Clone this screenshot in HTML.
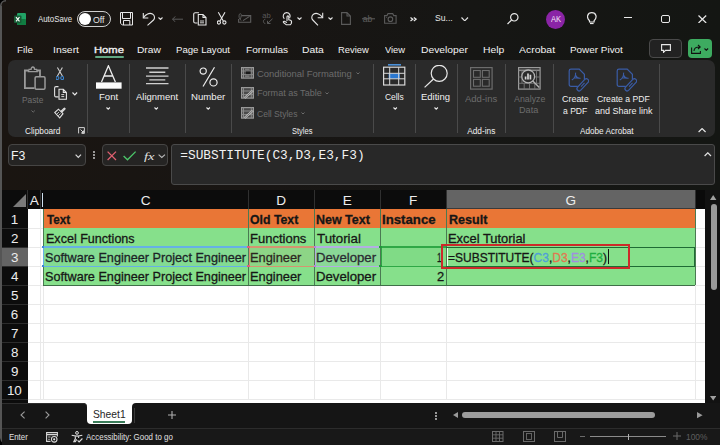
<!DOCTYPE html>
<html><head><meta charset="utf-8">
<style>
*{margin:0;padding:0;box-sizing:border-box}
html,body{width:720px;height:445px;overflow:hidden;background:linear-gradient(90deg,#1a1511 0%,#181513 35%,#161614 65%,#141613 100%);font-family:"Liberation Sans",sans-serif;position:relative}
.a{position:absolute;display:block}
.t{position:absolute;white-space:nowrap;line-height:1;transform-origin:0 0}
.c{-webkit-text-stroke:0.25px #161616}
</style></head><body>
<div class="a" style="left:0px;top:5.5px;width:1.6px;height:434px;background:#555555;"></div>
<svg class="a" style="left:0px;top:0px;" width="7" height="7" viewBox="0 0 7 7" fill="none"><path d="M0 0 H6 A5.5 5.5 0 0 0 0.8 5 V6 H0 Z" fill="#000"/><path d="M0.8 6 V5.5 A5 5 0 0 1 6 0.8" stroke="#555" stroke-width="1.6"/></svg>
<svg class="a" style="left:0px;top:436px;" width="9" height="9" viewBox="0 0 9 9" fill="none"><path d="M0 9 H8 A7.5 7.5 0 0 1 0.8 2 V0 H0 Z" fill="#000"/><path d="M0.8 0 V2 A7 7 0 0 0 8 8.2" stroke="#555" stroke-width="1.6"/></svg>
<svg class="a" style="left:14px;top:13px;" width="12" height="12" viewBox="0 0 12 12" fill="none"><rect x="3" y="0" width="9" height="12" rx="1.2" fill="#21a366"/><rect x="3" y="6" width="9" height="6" rx="1" fill="#107c41"/><rect x="0" y="2.5" width="7.5" height="7.5" rx="1" fill="#185c37"/><path d="M2 4.2 L5.5 8.3 M5.5 4.2 L2 8.3" stroke="#fff" stroke-width="1.1"/></svg>
<div class="t" style="left:38.10px;top:16.06px;font-size:8.2px;color:#e6e6e6;transform:scaleX(0.960);">AutoSave</div>
<div class="a" style="left:77px;top:10.8px;width:34px;height:16px;background:#1e1c1a;border:1.3px solid #cfcfcf;border-radius:8px;box-sizing:border-box"></div>
<div class="a" style="left:79px;top:13px;width:12px;height:12px;background:#fff;border-radius:50%"></div>
<div class="t" style="left:93.40px;top:15.72px;font-size:8.6px;color:#e6e6e6;transform:scaleX(1.021);">Off</div>
<svg class="a" style="left:119.5px;top:11.5px;" width="13" height="14" viewBox="0 0 13 14" fill="none"><path d="M0.5 0.5 H12.5 V13 H2.3 L0.5 11.2 Z" stroke="#e6e6e6" stroke-width="1"/><path d="M2.5 0.5 V6.5 H10.5 V0.5" stroke="#e6e6e6" stroke-width="1"/><path d="M3.5 13 V8.5 H9.8 V13" stroke="#e6e6e6" stroke-width="1"/></svg>
<svg class="a" style="left:141.5px;top:11.5px;" width="14" height="14" viewBox="0 0 14 14" fill="none"><path d="M1.3 1 V6 H6.3" stroke="#e6e6e6" stroke-width="1.1"/><path d="M1.5 5.8 C3.5 2 7.5 0.5 10.5 2 C13 3.5 13 6.5 11.5 8 L5.5 13.3" stroke="#e6e6e6" stroke-width="1.1"/></svg>
<svg class="a" style="left:158.2px;top:17px;" width="5" height="3" viewBox="0 0 5 3" fill="none"><path d="M0.5 0.5 L2.5 2.5 L4.5 0.5" stroke="#e0e0e0" stroke-width="1.1"/></svg>
<svg class="a" style="left:172px;top:15.6px;" width="11.5" height="6.5" viewBox="0 0 11.5 6.5" fill="none"><path d="M0.5 3.2 H11 M3.5 0.3 L0.5 3.2 L3.5 6.1" stroke="#5a5a5a" stroke-width="1"/></svg>
<svg class="a" style="left:192.7px;top:11.8px;" width="14" height="14" viewBox="0 0 14 14" fill="none"><path d="M6 0.8 H2.3 C1.3 0.8 0.7 1.4 0.7 2.4 V9.4 C0.7 10.4 1.3 11 2.3 11 H4.5" stroke="#e6e6e6" stroke-width="1.1"/><path d="M5.3 2.5 H10 L13 5.5 V13 H5.3 Z M10 2.5 V5.5 H13" stroke="#e6e6e6" stroke-width="1.1"/><path d="M7 9 H11 M7 10.8 H11" stroke="#e6e6e6" stroke-width="0.9"/></svg>
<svg class="a" style="left:217.4px;top:12.3px;" width="10" height="13" viewBox="0 0 10 13" fill="none"><circle cx="1.9" cy="10.5" r="1.6" stroke="#e6e6e6" stroke-width="1.1"/><circle cx="7.4" cy="10.5" r="1.6" stroke="#e6e6e6" stroke-width="1.1"/><path d="M1.3 0.3 L6.3 9 M8 0.3 L3 9" stroke="#e6e6e6" stroke-width="1.1"/></svg>
<svg class="a" style="left:238px;top:12.5px;" width="14" height="10" viewBox="0 0 14 10" fill="none"><path d="M3.5 2.6 H12.7 V9.3 H0.6 V6" stroke="#5e5e5e" stroke-width="1.1"/><path d="M5 7.6 L11.6 3.4" stroke="#5e5e5e" stroke-width="1.1"/><path d="M2 6.3 C0.5 4.5 0.8 0.6 2.2 0.6 C3.6 0.6 3.8 3.2 2 6.3 L3.4 7.6" stroke="#5e5e5e" stroke-width="0.9"/></svg>
<svg class="a" style="left:262px;top:12.2px;" width="12" height="13" viewBox="0 0 12 13" fill="none"><text x="0.2" y="5.8" font-family="Liberation Sans" font-size="7.6" fill="#5a5a5a">ab</text><path d="M3.3 7.2 C0.8 7.5 0.8 11.3 3.3 11.5 M5.5 11.5 L10.5 6.8 M5.5 11.5 H8.5 M5.5 11.5 V8.8" stroke="#5a5a5a" stroke-width="1"/></svg>
<svg class="a" style="left:280.5px;top:11.8px;" width="12" height="14" viewBox="0 0 12 14" fill="none"><path d="M6 9 V4.8 C6 3.5 7.8 3.5 7.8 4.8 V7.8 L9.5 8.3 C10.8 8.8 10.8 10 10.3 11.5 L9.3 12.8 H5.3 L2.5 10.5 C2 10 2.5 9 3.3 9.3 L6 10.5" stroke="#e6e6e6" stroke-width="1.1"/><path d="M3.3 6.8 C1 4.5 2.5 0.6 5.5 0.6 C8.5 0.6 10 3.5 8.6 6" stroke="#e6e6e6" stroke-width="1.1"/></svg>
<svg class="a" style="left:297px;top:17px;" width="5" height="3" viewBox="0 0 5 3" fill="none"><path d="M0.5 0.5 L2.5 2.5 L4.5 0.5" stroke="#e0e0e0" stroke-width="1.1"/></svg>
<svg class="a" style="left:310.8px;top:11.5px;" width="13" height="14" viewBox="0 0 13 14" fill="none"><path d="M11.7 0.8 V5.8 H6.7" stroke="#e6e6e6" stroke-width="1.1"/><path d="M11.5 5.6 C9.5 2 5.5 0.5 2.8 2 C0.3 3.5 0.3 6.5 1.8 8 L7 13.3" stroke="#e6e6e6" stroke-width="1.1"/></svg>
<svg class="a" style="left:327.5px;top:17px;" width="5" height="3" viewBox="0 0 5 3" fill="none"><path d="M0.5 0.5 L2.5 2.5 L4.5 0.5" stroke="#e0e0e0" stroke-width="1.1"/></svg>
<svg class="a" style="left:341.3px;top:12.2px;" width="10" height="13" viewBox="0 0 10 13" fill="none"><path d="M0.6 0.6 H6 L9.4 4 V12.4 H0.6 Z M6 0.6 V4 H9.4" stroke="#5a5a5a" stroke-width="1.1"/></svg>
<svg class="a" style="left:362px;top:14.4px;" width="13" height="9" viewBox="0 0 13 9" fill="none"><text x="0.8" y="7.5" font-family="Liberation Sans" font-size="8.6" fill="#5e5e5e">ab</text><path d="M0 4.8 H13" stroke="#5e5e5e" stroke-width="1"/></svg>
<svg class="a" style="left:384.4px;top:12.6px;" width="13" height="11" viewBox="0 0 13 11" fill="none"><path d="M0.6 2.6 H3 L4 0.6 H8.7 L9.7 2.6 H12.1 V10.3 H0.6 Z" stroke="#5a5a5a" stroke-width="1.1"/><circle cx="6.4" cy="6.2" r="2.3" stroke="#5a5a5a" stroke-width="1.1"/><circle cx="2.6" cy="4.3" r="0.5" fill="#5a5a5a"/></svg>
<svg class="a" style="left:409.5px;top:17px;" width="7" height="5" viewBox="0 0 7 5" fill="none"><path d="M0.5 0.5 L2.8 2.2 L0.5 4 M3.8 0.5 L6.1 2.2 L3.8 4" stroke="#e8e8e8" stroke-width="1.2"/></svg>
<div class="t" style="left:435.21px;top:14.28px;font-size:9px;color:#e8e8e8;transform:scaleX(0.958);">Su...</div>
<svg class="a" style="left:461.3px;top:16.9px;" width="7.5" height="4.5" viewBox="0 0 7.5 4.5" fill="none"><path d="M0.5 0.5 L3.75 3.8 L7 0.5" stroke="#e0e0e0" stroke-width="1.2"/></svg>
<svg class="a" style="left:506.5px;top:12.5px;" width="12" height="12" viewBox="0 0 12 12" fill="none"><circle cx="7.3" cy="4.3" r="3.7" stroke="#e8e8e8" stroke-width="1.2"/><path d="M4.6 7 L0.5 11" stroke="#e8e8e8" stroke-width="1.2"/></svg>
<div class="a" style="left:546.3px;top:9.5px;width:19px;height:19px;background:#8a24a6;border-radius:50%"></div>
<div class="t" style="left:550.80px;top:14.89px;font-size:8.4px;color:#f4e8f8;transform:scaleX(0.902);">AK</div>
<svg class="a" style="left:586.7px;top:12px;" width="10" height="13" viewBox="0 0 10 13" fill="none"><path d="M2.5 8.8 C0.5 7 0.3 5 0.7 3.5 C1.3 1.5 3 0.6 4.8 0.6 C6.6 0.6 8.3 1.5 8.9 3.5 C9.3 5 9.1 7 7.1 8.8 V10 H2.5 Z" stroke="#e8e8e8" stroke-width="1.2"/><path d="M3 11.5 H6.6" stroke="#e8e8e8" stroke-width="1.2"/></svg>
<div class="a" style="left:623.8px;top:17px;width:8.5px;height:1.3px;background:#e8e8e8;"></div>
<div class="a" style="left:661px;top:14.5px;width:9px;height:8.5px;background:transparent;border:1.4px solid #e8e8e8;border-radius:2px;box-sizing:border-box"></div>
<svg class="a" style="left:698.4px;top:14.5px;" width="9" height="8.5" viewBox="0 0 9 8.5" fill="none"><path d="M0.5 0.5 L8.2 8 M8.2 0.5 L0.5 8" stroke="#e8e8e8" stroke-width="1.2"/></svg>
<div class="t" style="left:17.41px;top:44.76px;font-size:9.5px;color:#f2f2f2;transform:scaleX(1.046);">File</div>
<div class="t" style="left:53.06px;top:44.76px;font-size:9.5px;color:#f2f2f2;transform:scaleX(1.094);">Insert</div>
<div class="t" style="left:94.10px;top:44.76px;font-size:9.5px;color:#f2f2f2;transform:scaleX(1.179);-webkit-text-stroke:0.35px #f2f2f2;">Home</div>
<div class="t" style="left:137.18px;top:44.76px;font-size:9.5px;color:#f2f2f2;transform:scaleX(1.074);">Draw</div>
<div class="t" style="left:175.83px;top:44.76px;font-size:9.5px;color:#f2f2f2;transform:scaleX(1.013);">Page Layout</div>
<div class="t" style="left:246.19px;top:44.76px;font-size:9.5px;color:#f2f2f2;transform:scaleX(1.064);">Formulas</div>
<div class="t" style="left:302.17px;top:44.76px;font-size:9.5px;color:#f2f2f2;transform:scaleX(1.089);">Data</div>
<div class="t" style="left:338.25px;top:44.76px;font-size:9.5px;color:#f2f2f2;transform:scaleX(0.987);">Review</div>
<div class="t" style="left:384.95px;top:44.76px;font-size:9.5px;color:#f2f2f2;transform:scaleX(0.981);">View</div>
<div class="t" style="left:421.18px;top:44.76px;font-size:9.5px;color:#f2f2f2;transform:scaleX(1.084);">Developer</div>
<div class="t" style="left:483.17px;top:44.76px;font-size:9.5px;color:#f2f2f2;transform:scaleX(1.088);">Help</div>
<div class="t" style="left:519.00px;top:44.76px;font-size:9.5px;color:#f2f2f2;transform:scaleX(1.102);">Acrobat</div>
<div class="t" style="left:570.21px;top:44.76px;font-size:9.5px;color:#f2f2f2;transform:scaleX(1.043);">Power Pivot</div>
<div class="a" style="left:95px;top:55.8px;width:29px;height:1.8px;background:#62a883;border-radius:1px"></div>
<div class="a" style="left:649px;top:39px;width:32.7px;height:19px;background:#222222;border:1px solid #4a4a4a;border-radius:4px;box-sizing:border-box"></div>
<svg class="a" style="left:660.5px;top:44px;" width="10" height="9" viewBox="0 0 10 9" fill="none"><path d="M0.6 0.6 H9.4 V6.4 H4.5 L2.5 8.4 V6.4 H0.6 Z" stroke="#e8e8e8" stroke-width="1.1"/></svg>
<div class="a" style="left:687.6px;top:39px;width:24.4px;height:19px;background:#3dab60;border-radius:4px"></div>
<svg class="a" style="left:691px;top:43.5px;" width="10" height="10" viewBox="0 0 10 10" fill="none"><path d="M0.6 3.5 V9.4 H9.4 V7 M3 7 C3 4 5 3 8.5 3 M7 1 L9.3 3 L7 5" stroke="#111" stroke-width="1.1"/></svg>
<svg class="a" style="left:703.5px;top:48px;" width="5" height="3" viewBox="0 0 5 3" fill="none"><path d="M0.5 0.5 L2.3 2.3 L4.1 0.5" stroke="#111" stroke-width="1.1"/></svg>
<div class="a" style="left:8px;top:60px;width:707px;height:77px;background:#2a2a2a;border-radius:7px"></div>
<div class="a" style="left:86.9px;top:64px;width:1px;height:69px;background:#4a4a4a;"></div>
<div class="a" style="left:129.0px;top:64px;width:1px;height:69px;background:#4a4a4a;"></div>
<div class="a" style="left:184.5px;top:64px;width:1px;height:69px;background:#4a4a4a;"></div>
<div class="a" style="left:231.4px;top:64px;width:1px;height:69px;background:#4a4a4a;"></div>
<div class="a" style="left:373.0px;top:64px;width:1px;height:69px;background:#4a4a4a;"></div>
<div class="a" style="left:414.9px;top:64px;width:1px;height:69px;background:#4a4a4a;"></div>
<div class="a" style="left:456.7px;top:64px;width:1px;height:69px;background:#4a4a4a;"></div>
<div class="a" style="left:505.2px;top:64px;width:1px;height:69px;background:#4a4a4a;"></div>
<div class="a" style="left:553.1px;top:64px;width:1px;height:69px;background:#4a4a4a;"></div>
<div class="a" style="left:659.3px;top:64px;width:1px;height:69px;background:#4a4a4a;"></div>
<svg class="a" style="left:23px;top:66px;" width="24" height="25" viewBox="0 0 24 25" fill="none"><path d="M5.3 4.5 H1.9 V22.1 H11.5 M14 4.5 H17 V10.2" stroke="#9a9a9a" stroke-width="1.8"/><path d="M5.4 5.6 L6 3.3 H8.1 C8.1 1.8 8.9 1 9.8 1 C10.7 1 11.5 1.8 11.5 3.3 H13.6 L14.2 5.6 Z" stroke="#9a9a9a" stroke-width="1.3"/><rect x="12.1" y="10.8" width="9.9" height="12.4" rx="1.2" stroke="#9a9a9a" stroke-width="1.5"/></svg>
<div class="t" style="left:22.13px;top:96.05px;font-size:8.8px;color:#707070;transform:scaleX(0.947);">Paste</div>
<svg class="a" style="left:30.8px;top:110px;" width="5" height="3" viewBox="0 0 5 3" fill="none"><path d="M0.5 0.5 L2.2 2.2 L3.9 0.5" stroke="#6a6a6a" stroke-width="1"/></svg>
<svg class="a" style="left:56px;top:66.5px;" width="8" height="13.5" viewBox="0 0 8 13.5" fill="none"><path d="M1.4 0.5 L6.4 9 M6.4 0.5 L1.4 9" stroke="#d0d0d0" stroke-width="1.1"/><circle cx="1.4" cy="11" r="1.5" stroke="#3d86d0" stroke-width="1.1"/><circle cx="6.2" cy="11" r="1.5" stroke="#3d86d0" stroke-width="1.1"/></svg>
<svg class="a" style="left:53.5px;top:86px;" width="13.5" height="14" viewBox="0 0 13.5 14" fill="none"><path d="M4.5 0.6 H2 C1.1 0.6 0.6 1.1 0.6 2 V9.5 C0.6 10.4 1.1 10.9 2 10.9 H4.5" stroke="#e0e0e0" stroke-width="1.1"/><path d="M5 3.3 H9.3 L12.4 6.4 V13.2 H5 Z M9.3 3.3 V6.4 H12.4" stroke="#e6e6e6" stroke-width="1.1"/><path d="M7.3 8.6 H10.2 M7.3 10.6 H10.2" stroke="#e6e6e6" stroke-width="0.9"/></svg>
<svg class="a" style="left:72px;top:91.8px;" width="6" height="4" viewBox="0 0 6 4" fill="none"><path d="M0.5 0.5 L2.8 2.8 L5.1 0.5" stroke="#e8e8e8" stroke-width="1.2"/></svg>
<svg class="a" style="left:53.8px;top:106.5px;" width="12.5" height="12" viewBox="0 0 12.5 12" fill="none"><path d="M0.8 5.5 L4.5 2.2 L9 6.7 L5.7 10.8 Z" stroke="#e0e0e0" stroke-width="1.1"/><path d="M6.8 4.5 L10 1.3 C10.6 0.7 11.5 1.6 10.9 2.2 L7.7 5.4" stroke="#e0e0e0" stroke-width="1.1"/><path d="M2.8 7.2 L5 5 M4.2 8.8 L6.5 6.5" stroke="#e0e0e0" stroke-width="0.8"/></svg>
<div class="t" style="left:24.98px;top:126.57px;font-size:8.3px;color:#f0f0f0;">Clipboard</div>
<svg class="a" style="left:78.2px;top:126.5px;" width="7" height="7" viewBox="0 0 7 7" fill="none"><path d="M0.6 6.4 V0.6 H6.4 V6.4 H3.5" stroke="#d0d0d0" stroke-width="1"/><path d="M2.5 2.5 L5.5 5.5 M5.5 3.5 V5.5 H3.5" stroke="#d0d0d0" stroke-width="1"/></svg>
<svg class="a" style="left:95.9px;top:65px;" width="26" height="24" viewBox="0 0 26 24" fill="none"><path d="M5.5 17 L12.4 0.8 L19.4 17 M8.3 11 H16.5" stroke="#ededed" stroke-width="1.3"/><rect x="0" y="17.4" width="25.6" height="6.3" fill="#fbfbfb"/></svg>
<div class="t" style="left:98.94px;top:92.85px;font-size:8.8px;color:#f0f0f0;transform:scaleX(1.086);">Font</div>
<svg class="a" style="left:106.1px;top:107px;" width="5" height="3" viewBox="0 0 5 3" fill="none"><path d="M0.5 0.5 L2.2 2.2 L3.9 0.5" stroke="#e8e8e8" stroke-width="1.1"/></svg>
<svg class="a" style="left:145.7px;top:67px;" width="23" height="18" viewBox="0 0 23 18" fill="none"><path d="M0 1 H22.5 M3.3 5.2 H19.3 M0 9.1 H22.5 M3.3 12.9 H19.3 M0 16.6 H22.5" stroke="#cfcfcf" stroke-width="1.4"/></svg>
<div class="t" style="left:135.90px;top:92.85px;font-size:8.8px;color:#f0f0f0;transform:scaleX(1.077);">Alignment</div>
<svg class="a" style="left:154.4px;top:107px;" width="5" height="3" viewBox="0 0 5 3" fill="none"><path d="M0.5 0.5 L2.2 2.2 L3.9 0.5" stroke="#e8e8e8" stroke-width="1.1"/></svg>
<svg class="a" style="left:199px;top:67px;" width="19" height="20" viewBox="0 0 19 20" fill="none"><circle cx="4.2" cy="4.1" r="3.1" stroke="#ededed" stroke-width="1.2"/><circle cx="14.5" cy="15.4" r="3.6" stroke="#ededed" stroke-width="1.2"/><path d="M15.5 0.3 L4 19.5" stroke="#ededed" stroke-width="1.2"/></svg>
<div class="t" style="left:190.93px;top:93.05px;font-size:8.8px;color:#f0f0f0;transform:scaleX(1.095);">Number</div>
<svg class="a" style="left:206.2px;top:107px;" width="5" height="3" viewBox="0 0 5 3" fill="none"><path d="M0.5 0.5 L2.2 2.2 L3.9 0.5" stroke="#e8e8e8" stroke-width="1.1"/></svg>
<svg class="a" style="left:241.3px;top:67.2px;" width="13" height="12" viewBox="0 0 13 12" fill="none"><rect x="0.6" y="0.6" width="11.8" height="10.5" fill="#4a4a4a" stroke="#9a9a9a" stroke-width="1.2"/><path d="M0.6 4 H12.4 M0.6 7.6 H12.4 M2.5 0.6 V11 M10.3 0.6 V11" stroke="#8a8a8a" stroke-width="1"/><rect x="5" y="4.5" width="4.5" height="2.6" fill="#1a1a1a"/><rect x="4" y="1.5" width="4.5" height="1.8" fill="#777"/><rect x="4" y="8.3" width="4.5" height="1.8" fill="#777"/></svg>
<svg class="a" style="left:241.3px;top:87px;" width="13" height="12" viewBox="0 0 13 12" fill="none"><rect x="0.6" y="0.6" width="11.8" height="10.5" fill="#4a4a4a" stroke="#9a9a9a" stroke-width="1.2"/><path d="M0.6 4 H12.4 M0.6 7.6 H12.4 M2.5 0.6 V11 M10.3 0.6 V11" stroke="#8a8a8a" stroke-width="1"/><path d="M3.5 11 L12 3.5" stroke="#c8c8c8" stroke-width="2.2"/><path d="M3.5 11 L12 3.5" stroke="#555" stroke-width="0.8"/></svg>
<svg class="a" style="left:241.3px;top:107px;" width="13" height="12" viewBox="0 0 13 12" fill="none"><rect x="0.6" y="0.6" width="11.8" height="10.5" fill="#4a4a4a" stroke="#9a9a9a" stroke-width="1.2"/><path d="M0.6 4 H12.4 M0.6 7.6 H12.4 M2.5 0.6 V11 M10.3 0.6 V11" stroke="#8a8a8a" stroke-width="1"/><path d="M3.5 11 L12 3.5" stroke="#c8c8c8" stroke-width="2.2"/><path d="M3.5 11 L12 3.5" stroke="#555" stroke-width="0.8"/></svg>
<div class="t" style="left:257.13px;top:69.53px;font-size:9.3px;color:#6c6c6c;transform:scaleX(1.014);">Conditional Formatting</div>
<svg class="a" style="left:355.8px;top:72.3px;" width="4" height="3" viewBox="0 0 4 3" fill="none"><path d="M0.5 0.5 L2 2 L3.5 0.5" stroke="#6c6c6c" stroke-width="1"/></svg>
<div class="t" style="left:256.88px;top:89.23px;font-size:9.3px;color:#6c6c6c;transform:scaleX(0.974);">Format as Table</div>
<svg class="a" style="left:324.6px;top:92.2px;" width="4" height="3" viewBox="0 0 4 3" fill="none"><path d="M0.5 0.5 L2 2 L3.5 0.5" stroke="#6c6c6c" stroke-width="1"/></svg>
<div class="t" style="left:257.17px;top:109.53px;font-size:9.3px;color:#6c6c6c;transform:scaleX(0.920);">Cell Styles</div>
<svg class="a" style="left:300.5px;top:112px;" width="4" height="3" viewBox="0 0 4 3" fill="none"><path d="M0.5 0.5 L2 2 L3.5 0.5" stroke="#6c6c6c" stroke-width="1"/></svg>
<div class="t" style="left:292.06px;top:126.97px;font-size:8.3px;color:#f0f0f0;transform:scaleX(0.906);">Styles</div>
<svg class="a" style="left:382.5px;top:64px;" width="23" height="22" viewBox="0 0 23 22" fill="none"><rect x="5" y="0" width="13" height="1.6" fill="#4a90d9"/><rect x="5.6" y="9.3" width="11.4" height="5.5" fill="#2b78d0"/><rect x="0.6" y="3.2" width="21.2" height="17.8" stroke="#d8d8d8" stroke-width="1.2"/><path d="M0.6 9.3 H21.8 M0.6 14.8 H21.8 M6.7 3.2 V21 M15.7 3.2 V21" stroke="#d8d8d8" stroke-width="1"/></svg>
<div class="t" style="left:384.78px;top:93.05px;font-size:8.8px;color:#f0f0f0;transform:scaleX(0.956);">Cells</div>
<svg class="a" style="left:393.1px;top:107px;" width="5" height="3" viewBox="0 0 5 3" fill="none"><path d="M0.5 0.5 L2.2 2.2 L3.9 0.5" stroke="#e8e8e8" stroke-width="1.1"/></svg>
<svg class="a" style="left:423.5px;top:65.2px;" width="24" height="23" viewBox="0 0 24 23" fill="none"><circle cx="15.2" cy="8.3" r="8" stroke="#e8e8e8" stroke-width="1.2"/><path d="M9.5 14 L0.6 22.4" stroke="#e8e8e8" stroke-width="1.2"/></svg>
<div class="t" style="left:421.24px;top:93.05px;font-size:8.8px;color:#f0f0f0;transform:scaleX(1.076);">Editing</div>
<svg class="a" style="left:433.8px;top:107px;" width="5" height="3" viewBox="0 0 5 3" fill="none"><path d="M0.5 0.5 L2.2 2.2 L3.9 0.5" stroke="#e8e8e8" stroke-width="1.1"/></svg>
<svg class="a" style="left:470.3px;top:66.8px;" width="23" height="23" viewBox="0 0 23 23" fill="none"><rect x="0.6" y="0.6" width="21.5" height="21.5" stroke="#6c6c6c" stroke-width="1.2"/><rect x="3.5" y="3.5" width="6.8" height="6.8" stroke="#6c6c6c" stroke-width="1.1"/><rect x="12.4" y="3.5" width="6.8" height="6.8" stroke="#6c6c6c" stroke-width="1.1"/><rect x="3.5" y="12.4" width="6.8" height="6.8" stroke="#6c6c6c" stroke-width="1.1"/><rect x="12.4" y="12.4" width="6.8" height="6.8" stroke="#6c6c6c" stroke-width="1.1"/></svg>
<div class="t" style="left:465.40px;top:94.53px;font-size:9.3px;color:#6c6c6c;transform:scaleX(1.022);">Add-ins</div>
<div class="t" style="left:467.20px;top:126.67px;font-size:8.3px;color:#f0f0f0;">Add-ins</div>
<svg class="a" style="left:518.3px;top:66.8px;" width="23" height="23" viewBox="0 0 23 23" fill="none"><rect x="0.6" y="0.6" width="21.5" height="21.5" stroke="#9a9a9a" stroke-width="1.2"/><path d="M0.6 3.3 H22" stroke="#8a8a8a" stroke-width="1.6"/><path d="M0.6 10 H22 M0.6 16.3 H22 M6.2 16.3 V22 M11.5 16.3 V22 M16.8 16.3 V22 M4 3.5 V16.3 M18.5 3.5 V16.3" stroke="#777" stroke-width="0.9"/><circle cx="10.2" cy="9.4" r="6.4" fill="#2a2a2a" stroke="#b4b4b4" stroke-width="1.3"/><path d="M14.8 14 L21.3 20.6" stroke="#b4b4b4" stroke-width="1.4"/><path d="M7.6 12.6 V9.6 M10 12.6 V6.6 M12.4 12.6 V7.8" stroke="#d4d4d4" stroke-width="1.7"/></svg>
<div class="t" style="left:514.00px;top:94.53px;font-size:9.3px;color:#6c6c6c;transform:scaleX(0.948);">Analyze</div>
<div class="t" style="left:519.37px;top:106.43px;font-size:9.3px;color:#6c6c6c;transform:scaleX(0.980);">Data</div>
<svg class="a" style="left:567.5px;top:67.5px;" width="21" height="24.5" viewBox="0 0 21 24.5" fill="none"><path d="M9.8 18.4 H3 C1.9 18.4 1.2 17.7 1.2 16.6 V2.9 C1.2 1.8 1.9 1.1 3 1.1 H11.2 L16.4 6.3 V11.5" stroke="#3a5ca6" stroke-width="1.2"/><path d="M7.6 4.6 C7.8 7.5 6.5 10.5 3.8 12 M7.9 7.5 C8.5 9.5 10.5 10.5 12.6 10.2 M6.5 9.8 L10.5 10.2" stroke="#3a5ca6" stroke-width="1.1"/><g transform="translate(14.8 16.8) rotate(-47)"><rect x="-7.5" y="-2.2" width="15" height="4.4" rx="2.2" stroke="#3a5ca6" stroke-width="1.2"/><path d="M-2.5 0 H2.5" stroke="#3a5ca6" stroke-width="1.1"/></g></svg>
<svg class="a" style="left:615.5px;top:67.5px;" width="21" height="24.5" viewBox="0 0 21 24.5" fill="none"><path d="M9.8 18.4 H3 C1.9 18.4 1.2 17.7 1.2 16.6 V2.9 C1.2 1.8 1.9 1.1 3 1.1 H11.2 L16.4 6.3 V11.5" stroke="#3a5ca6" stroke-width="1.2"/><path d="M7.6 4.6 C7.8 7.5 6.5 10.5 3.8 12 M7.9 7.5 C8.5 9.5 10.5 10.5 12.6 10.2 M6.5 9.8 L10.5 10.2" stroke="#3a5ca6" stroke-width="1.1"/><g transform="translate(14.8 16.8) rotate(-47)"><rect x="-7.5" y="-2.2" width="15" height="4.4" rx="2.2" stroke="#3a5ca6" stroke-width="1.2"/><path d="M-2.5 0 H2.5" stroke="#3a5ca6" stroke-width="1.1"/></g></svg>
<div class="t" style="left:561.85px;top:94.73px;font-size:9.3px;color:#f0f0f0;transform:scaleX(0.961);">Create</div>
<div class="t" style="left:563.36px;top:106.53px;font-size:9.3px;color:#f0f0f0;transform:scaleX(0.921);">a PDF</div>
<div class="t" style="left:596.77px;top:94.73px;font-size:9.3px;color:#f0f0f0;transform:scaleX(0.928);">Create a PDF</div>
<div class="t" style="left:594.54px;top:106.53px;font-size:9.3px;color:#f0f0f0;transform:scaleX(0.966);">and Share link</div>
<div class="t" style="left:579.50px;top:126.67px;font-size:8.3px;color:#f0f0f0;transform:scaleX(0.985);">Adobe Acrobat</div>
<svg class="a" style="left:697.8px;top:127.7px;" width="8.2" height="5" viewBox="0 0 8.2 5" fill="none"><path d="M0.6 4 L4.1 0.6 L7.6 4" stroke="#e8e8e8" stroke-width="1.2"/></svg>
<div class="a" style="left:8px;top:144px;width:78px;height:22px;background:#252423;border:1px solid #464544;border-radius:4px;box-sizing:border-box"></div>
<div class="t" style="left:11.22px;top:149.56px;font-size:12.8px;color:#f4f4f4;transform:scaleX(0.957);">F3</div>
<svg class="a" style="left:74.6px;top:154px;" width="7" height="4.5" viewBox="0 0 7 4.5" fill="none"><path d="M0.6 0.6 L3.3 3.3 L6 0.6" stroke="#d8d8d8" stroke-width="1.2"/></svg>
<svg class="a" style="left:93px;top:151px;" width="2" height="8" viewBox="0 0 2 8" fill="none"><circle cx="1" cy="1" r="0.9" fill="#d8d8d8"/><circle cx="1" cy="4" r="0.9" fill="#d8d8d8"/><circle cx="1" cy="7" r="0.9" fill="#d8d8d8"/></svg>
<div class="a" style="left:102px;top:144px;width:66px;height:22px;background:#252423;border:1px solid #464544;border-radius:4px;box-sizing:border-box"></div>
<svg class="a" style="left:107px;top:150.6px;" width="10" height="10" viewBox="0 0 10 10" fill="none"><path d="M0.6 0.6 L9 9 M9 0.6 L0.6 9" stroke="#e06070" stroke-width="1.3"/></svg>
<svg class="a" style="left:123.2px;top:150.8px;" width="13.5" height="10" viewBox="0 0 13.5 10" fill="none"><path d="M0.6 5 L4.5 8.8 L12.6 0.6" stroke="#4cc76a" stroke-width="1.3"/></svg>
<div class="t" style="left:143.55px;top:150.69px;font-size:11px;color:#e0e0e0;font-style:italic;font-family:'Liberation Serif',serif;transform:scaleX(1.319);">fx</div>
<svg class="a" style="left:157.5px;top:154px;" width="8" height="4.5" viewBox="0 0 8 4.5" fill="none"><path d="M0.6 0.6 L3.8 3.5 L7 0.6" stroke="#bbb" stroke-width="1.1"/></svg>
<div class="a" style="left:171px;top:144px;width:544px;height:41px;background:#282828;border:1px solid #4a4a4a;border-radius:3px;box-sizing:border-box"></div>
<div class="t" style="left:180.29px;top:149.54px;font-size:12.8px;color:#f2f2f2;font-family:'Liberation Mono',monospace;">=SUBSTITUTE(C3,D3,E3,F3)</div>
<svg class="a" style="left:704px;top:151.5px;" width="8" height="5" viewBox="0 0 8 5" fill="none"><path d="M0.6 4 L3.8 0.8 L7 4" stroke="#e0e0e0" stroke-width="1.2"/></svg>
<div class="a" style="left:1.5px;top:190px;width:703.5px;height:218px;background:#ffffff;"></div>
<div class="a" style="left:1.5px;top:190px;width:693.5px;height:19px;background:#0c0c0c;"></div>
<div class="a" style="left:1.5px;top:190px;width:26px;height:218px;background:#0c0c0c;"></div>
<div class="a" style="left:695px;top:190px;width:10px;height:19px;background:#0a0a0a;"></div>
<div class="a" style="left:446.5px;top:190px;width:248.5px;height:19px;background:#646464;"></div>
<div class="a" style="left:446.5px;top:208px;width:248.5px;height:1px;background:#3a3a3a;"></div>
<div class="a" style="left:1.5px;top:247px;width:26px;height:19.5px;background:#646464;"></div>
<svg class="a" style="left:12.5px;top:193.5px;" width="13" height="13" viewBox="0 0 13 13" fill="none"><path d="M13 0 V13 H0 Z" fill="#7a7a7a"/></svg>
<div class="a" style="left:27.0px;top:190px;width:1px;height:19px;background:#303030;"></div>
<div class="a" style="left:40.0px;top:190px;width:1px;height:19px;background:#303030;"></div>
<div class="a" style="left:248.0px;top:190px;width:1px;height:19px;background:#303030;"></div>
<div class="a" style="left:314.3px;top:190px;width:1px;height:19px;background:#303030;"></div>
<div class="a" style="left:379.8px;top:190px;width:1px;height:19px;background:#303030;"></div>
<div class="a" style="left:445.8px;top:190px;width:1px;height:19px;background:#303030;"></div>
<div class="a" style="left:694.5px;top:190px;width:1px;height:19px;background:#303030;"></div>
<div class="a" style="left:41.8px;top:193px;width:1px;height:13.5px;background:#cfe0f0;"></div>
<div class="a" style="left:27.5px;top:227.5px;width:677.5px;height:1px;background:#e9e9e9;"></div>
<div class="a" style="left:1.5px;top:227.5px;width:26px;height:1px;background:#2c2c2c;"></div>
<div class="a" style="left:27.5px;top:246.5px;width:677.5px;height:1px;background:#e9e9e9;"></div>
<div class="a" style="left:1.5px;top:246.5px;width:26px;height:1px;background:#2c2c2c;"></div>
<div class="a" style="left:27.5px;top:265.5px;width:677.5px;height:1px;background:#e9e9e9;"></div>
<div class="a" style="left:1.5px;top:265.5px;width:26px;height:1px;background:#2c2c2c;"></div>
<div class="a" style="left:27.5px;top:284.5px;width:677.5px;height:1px;background:#e9e9e9;"></div>
<div class="a" style="left:1.5px;top:284.5px;width:26px;height:1px;background:#2c2c2c;"></div>
<div class="a" style="left:27.5px;top:303.5px;width:677.5px;height:1px;background:#e9e9e9;"></div>
<div class="a" style="left:1.5px;top:303.5px;width:26px;height:1px;background:#2c2c2c;"></div>
<div class="a" style="left:27.5px;top:322.5px;width:677.5px;height:1px;background:#e9e9e9;"></div>
<div class="a" style="left:1.5px;top:322.5px;width:26px;height:1px;background:#2c2c2c;"></div>
<div class="a" style="left:27.5px;top:341.5px;width:677.5px;height:1px;background:#e9e9e9;"></div>
<div class="a" style="left:1.5px;top:341.5px;width:26px;height:1px;background:#2c2c2c;"></div>
<div class="a" style="left:27.5px;top:360.5px;width:677.5px;height:1px;background:#e9e9e9;"></div>
<div class="a" style="left:1.5px;top:360.5px;width:26px;height:1px;background:#2c2c2c;"></div>
<div class="a" style="left:27.5px;top:379.5px;width:677.5px;height:1px;background:#e9e9e9;"></div>
<div class="a" style="left:1.5px;top:379.5px;width:26px;height:1px;background:#2c2c2c;"></div>
<div class="a" style="left:27.5px;top:398.5px;width:677.5px;height:1px;background:#e9e9e9;"></div>
<div class="a" style="left:1.5px;top:398.5px;width:26px;height:1px;background:#2c2c2c;"></div>
<div class="a" style="left:40.3px;top:209px;width:1px;height:191px;background:#e9e9e9;"></div>
<div class="a" style="left:43.0px;top:209px;width:1px;height:191px;background:#e9e9e9;"></div>
<div class="a" style="left:248.0px;top:209px;width:1px;height:191px;background:#e9e9e9;"></div>
<div class="a" style="left:314.3px;top:209px;width:1px;height:191px;background:#e9e9e9;"></div>
<div class="a" style="left:379.8px;top:209px;width:1px;height:191px;background:#e9e9e9;"></div>
<div class="a" style="left:445.8px;top:209px;width:1px;height:191px;background:#e9e9e9;"></div>
<div class="a" style="left:694.5px;top:209px;width:1px;height:191px;background:#e9e9e9;"></div>
<div class="a" style="left:43px;top:209px;width:652px;height:19px;background:#e97636;"></div>
<div class="a" style="left:43px;top:228px;width:652px;height:57px;background:#86e08b;"></div>
<div class="a" style="left:248.0px;top:209px;width:1px;height:76px;background:#4a7a52;"></div>
<div class="a" style="left:314.3px;top:209px;width:1px;height:76px;background:#4a7a52;"></div>
<div class="a" style="left:379.8px;top:209px;width:1px;height:76px;background:#4a7a52;"></div>
<div class="a" style="left:445.8px;top:209px;width:1px;height:76px;background:#4a7a52;"></div>
<div class="a" style="left:42.5px;top:209px;width:1px;height:76px;background:#4a7a52;"></div>
<div class="a" style="left:694.5px;top:209px;width:1px;height:76px;background:#4a7a52;"></div>
<div class="a" style="left:43px;top:284.5px;width:652px;height:1px;background:#3f6f48;"></div>
<div class="t" style="left:10.68px;top:212.96px;font-size:13.4px;color:#ececec;">1</div>
<div class="t" style="left:10.88px;top:231.96px;font-size:13.4px;color:#ececec;">2</div>
<div class="t" style="left:10.92px;top:250.96px;font-size:13.4px;color:#ececec;">3</div>
<div class="t" style="left:10.91px;top:269.96px;font-size:13.4px;color:#ececec;">4</div>
<div class="t" style="left:10.88px;top:288.96px;font-size:13.4px;color:#ececec;">5</div>
<div class="t" style="left:10.81px;top:307.96px;font-size:13.4px;color:#ececec;">6</div>
<div class="t" style="left:10.88px;top:326.96px;font-size:13.4px;color:#ececec;">7</div>
<div class="t" style="left:10.88px;top:345.96px;font-size:13.4px;color:#ececec;">8</div>
<div class="t" style="left:10.88px;top:364.96px;font-size:13.4px;color:#ececec;">9</div>
<div class="t" style="left:6.89px;top:383.96px;font-size:13.4px;color:#ececec;">10</div>
<div class="t" style="left:29.68px;top:194.19px;font-size:13.6px;color:#ededed;">A</div>
<div class="t" style="left:140.70px;top:194.19px;font-size:13.6px;color:#ededed;">C</div>
<div class="t" style="left:276.37px;top:194.19px;font-size:13.6px;color:#ededed;">D</div>
<div class="t" style="left:342.71px;top:194.19px;font-size:13.6px;color:#ededed;">E</div>
<div class="t" style="left:408.88px;top:194.19px;font-size:13.6px;color:#ededed;">F</div>
<div class="t" style="left:565.57px;top:194.19px;font-size:13.6px;color:#ededed;">G</div>
<div class="t" style="left:46.58px;top:213.13px;font-size:13.2px;color:#161616;font-weight:bold;transform:scaleX(0.885);-webkit-text-stroke:0.3px #161616;">Text</div>
<div class="t" style="left:250.31px;top:213.13px;font-size:13.2px;color:#161616;font-weight:bold;transform:scaleX(0.933);-webkit-text-stroke:0.3px #161616;">Old Text</div>
<div class="t" style="left:316.19px;top:213.13px;font-size:13.2px;color:#161616;font-weight:bold;transform:scaleX(0.945);-webkit-text-stroke:0.3px #161616;">New Text</div>
<div class="t" style="left:382.05px;top:213.13px;font-size:13.2px;color:#161616;font-weight:bold;-webkit-text-stroke:0.3px #161616;">Instance</div>
<div class="t" style="left:448.58px;top:213.13px;font-size:13.2px;color:#161616;font-weight:bold;transform:scaleX(0.953);-webkit-text-stroke:0.3px #161616;">Result</div>
<div class="t" style="left:45.69px;top:231.93px;font-size:13.2px;color:#161616;transform:scaleX(0.952);-webkit-text-stroke:0.3px #161616;">Excel Functions</div>
<div class="t" style="left:249.76px;top:231.93px;font-size:13.2px;color:#161616;transform:scaleX(0.986);-webkit-text-stroke:0.3px #161616;">Functions</div>
<div class="t" style="left:316.73px;top:231.93px;font-size:13.2px;color:#161616;transform:scaleX(1.010);-webkit-text-stroke:0.3px #161616;">Tutorial</div>
<div class="t" style="left:448.37px;top:231.93px;font-size:13.2px;color:#161616;transform:scaleX(0.978);-webkit-text-stroke:0.3px #161616;">Excel Tutorial</div>
<div class="t" style="left:45.43px;top:251.13px;font-size:13.2px;color:#161616;transform:scaleX(0.959);-webkit-text-stroke:0.3px #161616;">Software Engineer Project Engineer</div>
<div class="t" style="left:249.77px;top:251.13px;font-size:13.2px;color:#161616;transform:scaleX(0.973);-webkit-text-stroke:0.3px #161616;">Engineer</div>
<div class="t" style="left:315.95px;top:251.13px;font-size:13.2px;color:#161616;-webkit-text-stroke:0.3px #161616;">Developer</div>
<div class="t" style="left:45.43px;top:270.33px;font-size:13.2px;color:#161616;transform:scaleX(0.959);-webkit-text-stroke:0.3px #161616;">Software Engineer Project Engineer</div>
<div class="t" style="left:249.77px;top:270.33px;font-size:13.2px;color:#161616;transform:scaleX(0.973);-webkit-text-stroke:0.3px #161616;">Engineer</div>
<div class="t" style="left:315.95px;top:270.33px;font-size:13.2px;color:#161616;-webkit-text-stroke:0.3px #161616;">Developer</div>
<div class="t" style="left:436.55px;top:270.33px;font-size:13.2px;color:#161616;transform:scaleX(0.982);-webkit-text-stroke:0.3px #161616;">2</div>
<div class="t" style="left:437.40px;top:251.13px;font-size:13.2px;color:#161616;transform:scaleX(0.610);-webkit-text-stroke:0.3px #161616;">1</div>
<div class="a" style="left:43.5px;top:247px;width:205px;height:19px;background:rgba(100,170,230,0.08);"></div>
<div class="a" style="left:249px;top:247px;width:65.8px;height:19px;background:rgba(200,140,100,0.12);"></div>
<div class="a" style="left:315.3px;top:247px;width:65px;height:19px;background:rgba(170,160,230,0.13);"></div>
<div class="a" style="left:380.8px;top:247px;width:65.5px;height:19px;background:rgba(40,160,70,0.06);"></div>
<div class="a" style="left:43px;top:246.3px;width:205.5px;height:1.4px;background:#66b0e6;"></div>
<div class="a" style="left:43px;top:265.5px;width:205.5px;height:1.4px;background:#66b0e6;"></div>
<div class="a" style="left:43.2px;top:246.3px;width:1px;height:20.6px;background:#66b0e6;"></div>
<div class="a" style="left:248.5px;top:246.3px;width:66.30000000000001px;height:1.4px;background:#d69470;"></div>
<div class="a" style="left:248.5px;top:265.5px;width:66.30000000000001px;height:1.4px;background:#d69470;"></div>
<div class="a" style="left:248.7px;top:246.3px;width:1px;height:20.6px;background:#d69470;"></div>
<div class="a" style="left:314.8px;top:246.3px;width:65.5px;height:1.4px;background:#b2aee2;"></div>
<div class="a" style="left:314.8px;top:265.5px;width:65.5px;height:1.4px;background:#b2aee2;"></div>
<div class="a" style="left:315.0px;top:246.3px;width:1px;height:20.6px;background:#b2aee2;"></div>
<div class="a" style="left:380.3px;top:246.3px;width:66.0px;height:1.4px;background:#2fa846;"></div>
<div class="a" style="left:380.3px;top:265.5px;width:66.0px;height:1.4px;background:#2fa846;"></div>
<div class="a" style="left:380.5px;top:246.3px;width:1px;height:20.6px;background:#2fa846;"></div>
<div class="a" style="left:41.699999999999996px;top:245.6px;width:2.4px;height:2.4px;background:#3b86d8;"></div>
<div class="a" style="left:41.699999999999996px;top:264.9px;width:2.4px;height:2.4px;background:#3b86d8;"></div>
<div class="a" style="left:247.4px;top:245.6px;width:2.4px;height:2.4px;background:#e0607a;"></div>
<div class="a" style="left:247.4px;top:264.9px;width:2.4px;height:2.4px;background:#e0607a;"></div>
<div class="a" style="left:313.7px;top:245.6px;width:2.4px;height:2.4px;background:#b87ee0;"></div>
<div class="a" style="left:313.7px;top:264.9px;width:2.4px;height:2.4px;background:#b87ee0;"></div>
<div class="a" style="left:379.2px;top:245.6px;width:2.4px;height:2.4px;background:#1f9a3a;"></div>
<div class="a" style="left:379.2px;top:264.9px;width:2.4px;height:2.4px;background:#1f9a3a;"></div>
<div class="a" style="left:446.3px;top:246.5px;width:248.7px;height:1.3px;background:#1f6b35;"></div>
<div class="a" style="left:446.3px;top:265.8px;width:248.7px;height:1.3px;background:#1f6b35;"></div>
<div class="a" style="left:694.2px;top:246.5px;width:1.3px;height:20.5px;background:#1f6b35;"></div>
<div class="a" style="left:447px;top:248px;width:1px;height:18px;background:#eaffea;"></div>
<div class="t" style="left:448.40px;top:251.13px;font-size:13.2px;color:#161616;transform:scaleX(0.909);-webkit-text-stroke:0.3px currentColor"><span style="color:#161616">=SUBSTITUTE(</span><span style="color:#4f9fd8">C3</span><span style="color:#161616">,</span><span style="color:#e07850">D3</span><span style="color:#161616">,</span><span style="color:#a08ee0">E3</span><span style="color:#161616">,</span><span style="color:#1fae3f">F3</span><span style="color:#161616">)</span></div>
<div class="a" style="left:607.5px;top:249px;width:1px;height:15px;background:#111;"></div>
<div class="a" style="left:440.5px;top:244px;width:189px;height:25.3px;background:transparent;border:2.4px solid #cc2a2a;box-sizing:border-box"></div>
<div class="a" style="left:705px;top:190px;width:15px;height:213px;background:#121212;"></div>
<svg class="a" style="left:710.3px;top:194.5px;" width="6.4" height="5" viewBox="0 0 6.4 5" fill="none"><path d="M0 5 L3.2 0 L6.4 5 Z" fill="#a0a0a0"/></svg>
<div class="a" style="left:710.5px;top:203.5px;width:6px;height:86.5px;background:#9a9a9a;border-radius:3px"></div>
<svg class="a" style="left:709.5px;top:396px;" width="6.4" height="4.5" viewBox="0 0 6.4 4.5" fill="none"><path d="M0 0 L3.2 4.5 L6.4 0 Z" fill="#a0a0a0"/></svg>
<div class="a" style="left:1.5px;top:403px;width:85.2px;height:25px;background:#151515;border-radius:0 4px 0 0;box-shadow:inset 0 1px 0 #2e2e2e"></div>
<div class="a" style="left:132.2px;top:403px;width:587.8px;height:25px;background:#151515;border-radius:4px 0 0 0"></div>
<div class="a" style="left:86.7px;top:420px;width:45.5px;height:8px;background:#151515;"></div>
<svg class="a" style="left:20px;top:410.5px;" width="5" height="8" viewBox="0 0 5 8" fill="none"><path d="M0.6 0.6 L-3 4 L0.6 7.4" stroke="#9a9a9a" stroke-width="1.1" transform="translate(4 0)"/></svg>
<svg class="a" style="left:45px;top:410.5px;" width="5" height="8" viewBox="0 0 5 8" fill="none"><path d="M0.6 0.6 L4 4 L0.6 7.4" stroke="#9a9a9a" stroke-width="1.1"/></svg>
<div class="a" style="left:86.7px;top:400px;width:45.5px;height:24.4px;background:#ffffff;border-radius:0 0 4px 4px"></div>
<div class="t" style="left:92.84px;top:409.19px;font-size:11px;color:#262626;transform:scaleX(0.936);">Sheet1</div>
<div class="a" style="left:93.3px;top:420.8px;width:31.7px;height:1.8px;background:#3b7d5a;"></div>
<div class="a" style="left:134px;top:408px;width:1px;height:14.5px;background:#3a3a3a;"></div>
<svg class="a" style="left:168px;top:411px;" width="8" height="8" viewBox="0 0 8 8" fill="none"><path d="M4 0 V8 M0 4 H8" stroke="#b0b0b0" stroke-width="1.1"/></svg>
<svg class="a" style="left:435px;top:411.5px;" width="2" height="8" viewBox="0 0 2 8" fill="none"><circle cx="1" cy="1" r="0.9" fill="#d8d8d8"/><circle cx="1" cy="4" r="0.9" fill="#d8d8d8"/><circle cx="1" cy="7" r="0.9" fill="#d8d8d8"/></svg>
<svg class="a" style="left:452.8px;top:412px;" width="5" height="6" viewBox="0 0 5 6" fill="none"><path d="M0 3 L5 0 V6 Z" fill="#9a9a9a"/></svg>
<div class="a" style="left:462px;top:412.3px;width:192.5px;height:5.7px;background:#9c9c9c;border-radius:3px"></div>
<svg class="a" style="left:697.2px;top:412px;" width="6" height="7" viewBox="0 0 6 7" fill="none"><path d="M0 0 L5.6 3.15 L0 6.3 Z" fill="#9a9a9a"/></svg>
<div class="a" style="left:1.5px;top:428px;width:718.5px;height:17px;background:#181818;"></div>
<div class="a" style="left:1.5px;top:428px;width:718.5px;height:1px;background:#2c2c2c;"></div>
<div class="t" style="left:9.37px;top:432.58px;font-size:9px;color:#e0e0e0;transform:scaleX(0.871);">Enter</div>
<svg class="a" style="left:46px;top:432px;" width="12" height="11" viewBox="0 0 12 11" fill="none"><path d="M4.5 9.4 H0.6 V0.6 H11.4 V4.5 M0.6 2.6 H11.4" stroke="#d8d8d8" stroke-width="1.1"/><path d="M2.2 5 H4.5 M2.2 7.3 H3.8" stroke="#d8d8d8" stroke-width="0.9"/><circle cx="8.2" cy="7.3" r="2.8" fill="#181818" stroke="#d8d8d8" stroke-width="1.1"/><circle cx="8.2" cy="7.3" r="1.1" fill="#e8e8e8"/></svg>
<svg class="a" style="left:70.7px;top:431px;" width="12" height="12" viewBox="0 0 12 12" fill="none"><circle cx="6" cy="1.9" r="1.4" stroke="#e0e0e0" stroke-width="1"/><path d="M0.7 4.3 C2.5 4.9 4 5.1 6 5.1 C8 5.1 9.5 4.9 11.3 4.3" stroke="#e0e0e0" stroke-width="1.1"/><path d="M4.2 5.2 L4.4 7.6 L2.8 10.8 H4.3 L5.7 8.4" stroke="#e0e0e0" stroke-width="1.1"/><path d="M7.7 5.2 L7.6 7" stroke="#e0e0e0" stroke-width="1.1"/><path d="M6.6 9.4 L8.1 10.9 L11.4 7.5" stroke="#e0e0e0" stroke-width="1.1"/></svg>
<div class="t" style="left:85.50px;top:432.58px;font-size:9px;color:#e0e0e0;transform:scaleX(0.881);">Accessibility: Good to go</div>
<svg class="a" style="left:492px;top:431px;" width="11.5" height="11" viewBox="0 0 11.5 11" fill="none"><rect x="0.5" y="0.5" width="10.5" height="10" stroke="#6a6a6a" stroke-width="1"/><path d="M0.5 3.8 H11 M0.5 7.2 H11 M4 0.5 V10.5 M7.5 0.5 V10.5" stroke="#6a6a6a" stroke-width="0.9"/></svg>
<svg class="a" style="left:523.3px;top:431px;" width="12" height="11" viewBox="0 0 12 11" fill="none"><rect x="0.5" y="0.5" width="11" height="10" stroke="#6a6a6a" stroke-width="1"/><rect x="3.5" y="2.5" width="5" height="6" stroke="#6a6a6a" stroke-width="0.9"/></svg>
<svg class="a" style="left:554.2px;top:431px;" width="12" height="11" viewBox="0 0 12 11" fill="none"><rect x="0.5" y="0.5" width="11" height="10" stroke="#6a6a6a" stroke-width="1"/><path d="M3.5 0.5 V6.5 H8.5 V0.5" stroke="#6a6a6a" stroke-width="1"/></svg>
<div class="a" style="left:580px;top:436px;width:5px;height:1px;background:#6a6a6a;"></div>
<div class="a" style="left:590px;top:436px;width:76px;height:1.2px;background:#8a8a8a;"></div>
<div class="a" style="left:627.5px;top:433.5px;width:1.3px;height:6px;background:#b0b0b0;"></div>
<svg class="a" style="left:673px;top:432px;" width="8" height="8" viewBox="0 0 8 8" fill="none"><path d="M4 0 V8 M0 4 H8" stroke="#6a6a6a" stroke-width="1"/></svg>
<div class="t" style="left:685.87px;top:432.88px;font-size:9px;color:#5e5e5e;transform:scaleX(0.930);">100%</div>
</body></html>
